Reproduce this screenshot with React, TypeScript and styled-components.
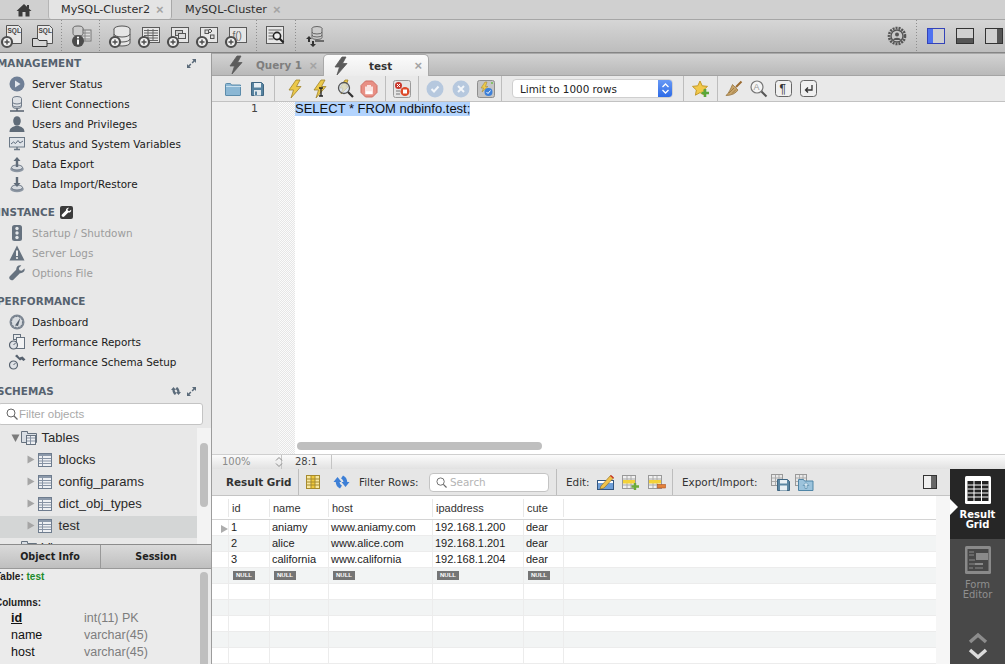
import React from "react";
import styled, { createGlobalStyle } from "styled-components";

const GlobalStyle = createGlobalStyle`
  html, body { margin: 0; padding: 0; background: #e8e8e8; overflow: hidden; }
  * { box-sizing: border-box; }
`;

const UI = `"DejaVu Sans", sans-serif`;
const HELV = `"Liberation Sans", Arial, sans-serif`;

const Window = styled.div`
  width: 1005px;
  height: 664px;
  display: flex;
  flex-direction: column;
  overflow: hidden;
  font-family: ${UI};
`;

const TabBar = styled.div`
  height: 19px;
  display: flex;
  background: #d0d0d0;
  flex: none;
`;
const HomeTab = styled.div`
  width: 48px;
  display: flex;
  align-items: center;
  justify-content: center;
  padding-right: 0;
`;
const ConnTab = styled.div<{ $active?: boolean }>`
  width: ${(p) => (p.$active ? 124 : 120)}px;
  display: flex;
  align-items: center;
  gap: 6px;
  padding-left: ${(p) => (p.$active ? 12 : 13)}px;
  font-size: 11.2px;
  color: #2e2e2e;
  background: ${(p) => (p.$active ? "#e4e4e4" : "transparent")};
  border-left: ${(p) => (p.$active ? "1px solid #b5b5b5" : "none")};
  border-right: ${(p) => (p.$active ? "1px solid #a8a8a8" : "none")};
  border-radius: 0 0 3px 3px;
`;
const TabClose = styled.span<{ $size?: number }>`
  font-family: ${HELV};
  font-size: ${(p) => p.$size ?? 13}px;
  font-weight: 700;
  line-height: 1;
  color: #a4a4a4;
`;

const MainToolbar = styled.div`
  height: 34px;
  flex: none;
  display: flex;
  align-items: center;
  background: linear-gradient(#d6d6d6, #bdbdbd);
  border-top: 1px solid #a6a6a6;
  border-bottom: 1px solid #858585;
`;
const Tool = styled.div<{ $w: number; $ml?: number }>`
  width: ${(p) => p.$w}px;
  margin-left: ${(p) => p.$ml ?? 0}px;
  height: 100%;
  flex: none;
  display: flex;
  align-items: center;
  justify-content: center;
`;
const DotSep = styled.div`
  width: 1px;
  height: 100%;
  flex: none;
  background: repeating-linear-gradient(#8e8e8e 0 1px, transparent 1px 3px);
`;
const Spacer = styled.div`
  flex: 1;
`;

const Body = styled.div`
  flex: 1;
  min-height: 0;
  display: flex;
`;

const Sidebar = styled.aside`
  width: 212px;
  flex: none;
  display: flex;
  flex-direction: column;
  background: #e8e8e8;
  border-right: 1px solid #9c9c9c;
  overflow: hidden;
`;
const SectionHeader = styled.div<{ $mt?: number }>`
  height: 20px;
  margin: ${(p) => p.$mt ?? 0}px 0 1px -3px;
  display: flex;
  align-items: center;
  gap: 5px;
  padding-right: 15px;
  font-size: 10.4px;
  font-weight: 700;
  color: #56626f;
  flex: none;
`;
const HeaderIcons = styled.div`
  margin-left: auto;
  display: flex;
  gap: 5px;
  align-items: center;
`;
const NavItem = styled.div<{ $off?: boolean }>`
  height: 20px;
  display: flex;
  align-items: center;
  font-size: 10.4px;
  color: ${(p) => (p.$off ? "#9c9c9c" : "#1a1a1a")};
  flex: none;
`;
const NavIcon = styled.div`
  width: 32px;
  padding-left: 9px;
  flex: none;
  display: flex;
  align-items: center;
`;
const FilterBox = styled.div`
  height: 22px;
  margin-top: 1px;
  margin-left: -2px;
  width: 205px;
  flex: none;
  display: flex;
  align-items: center;
  gap: 1px;
  padding-left: 7px;
  background: #fff;
  border: 1px solid #c4c4c4;
  border-radius: 3px;
  font-family: ${HELV};
  font-size: 11.5px;
  color: #a9a9a9;
`;
const TreePane = styled.div`
  height: 116px;
  margin-top: 3px;
  flex: none;
  display: flex;
  overflow: hidden;
`;
const TreeList = styled.div`
  width: 197px;
  flex: none;
  overflow: hidden;
`;
const TreeRow = styled.div<{ $depth: number; $selected?: boolean }>`
  height: 22px;
  display: flex;
  align-items: center;
  padding-left: ${(p) => (p.$depth === 0 ? 11 : 26)}px;
  padding-bottom: 3px;
  gap: ${(p) => (p.$depth === 0 ? 1 : 3)}px;
  font-family: ${HELV};
  font-size: 13px;
  color: #2a2a2a;
  background: ${(p) => (p.$selected ? "#d4d6d6" : "transparent")};
`;
const ScrollTrack = styled.div`
  flex: 1;
  background: #f3f3f3;
  padding: 15px 3px 0;
`;
const ScrollThumb = styled.div<{ $h: number }>`
  height: ${(p) => p.$h}px;
  background: #bfbfbf;
  border-radius: 4px;
`;
const SideTabs = styled.div`
  height: 25px;
  flex: none;
  display: flex;
  align-items: center;
  background: linear-gradient(#dadada, #bfbfbf);
  border-top: 1px solid #8c8c8c;
  border-bottom: 1px solid #999;
`;
const SideTab = styled.div<{ $w: number; $sep?: boolean }>`
  width: ${(p) => p.$w}px;
  height: 100%;
  display: flex;
  align-items: center;
  justify-content: center;
  font-size: 9.6px;
  font-weight: 700;
  color: #1f1f1f;
  border-right: ${(p) => (p.$sep ? "1px solid #999" : "none")};
`;
const InfoPane = styled.div`
  flex: 1;
  min-height: 0;
  display: flex;
  background: #ebebeb;
  overflow: hidden;
`;
const InfoText = styled.div`
  width: 197px;
  flex: none;
  padding-top: 2px;
`;
const InfoLabel = styled.div<{ $mb?: number }>`
  margin-left: -5px;
  margin-bottom: ${(p) => p.$mb ?? 0}px;
  height: 12px;
  font-family: ${HELV};
  font-size: 10px;
  line-height: 12px;
  font-weight: 700;
  color: #1d1d1d;
`;
const TableName = styled.span`
  color: #1c8b2b;
`;
const ColRow = styled.div`
  display: grid;
  grid-template-columns: 73px 1fr;
  height: 17px;
  padding-left: 11px;
  font-family: ${HELV};
  font-size: 12.5px;
  line-height: 17px;
`;
const ColName = styled.span<{ $pk?: boolean }>`
  color: #111;
  font-weight: ${(p) => (p.$pk ? 700 : 400)};
  text-decoration: ${(p) => (p.$pk ? "underline" : "none")};
`;
const ColType = styled.span`
  color: #7d7d7d;
`;
const InfoScroll = styled.div`
  flex: 1;
  padding: 3px 3px 0;
`;

const Main = styled.main`
  flex: 1;
  min-width: 0;
  display: flex;
  flex-direction: column;
`;
const QueryTabs = styled.div`
  height: 23px;
  flex: none;
  display: flex;
  align-items: flex-end;
  padding-left: 7px;
  background: linear-gradient(#d2d2d2, #b9b9b9);
  border-top: 1px solid #a8a8a8;
  border-bottom: 1px solid #a4a4a4;
`;
const QueryTab = styled.div<{ $active?: boolean }>`
  width: ${(p) => (p.$active ? 106 : 104)}px;
  height: ${(p) => (p.$active ? 22 : 20)}px;
  margin-bottom: ${(p) => (p.$active ? -1 : 0)}px;
  flex: none;
  display: flex;
  align-items: center;
  padding: 0 6px 0 8px;
  border-radius: 5px 5px 0 0;
  font-size: 10.4px;
  font-weight: 700;
  color: ${(p) => (p.$active ? "#333" : "#7e7e7e")};
  background: ${(p) => (p.$active ? "linear-gradient(#fbfbfb, #ececec)" : "transparent")};
  border: ${(p) => (p.$active ? "1px solid #a9a9a9" : "none")};
  border-bottom: none;
`;
const QueryTabTitle = styled.span<{ $pad: number }>`
  flex: 1;
  padding-left: ${(p) => p.$pad}px;
`;
const QueryToolbar = styled.div`
  height: 26px;
  flex: none;
  display: flex;
  align-items: center;
  padding-left: 9px;
  background: #e9e9e9;
  border-bottom: 1px solid #c2c2c2;
`;
const LineSep = styled.div`
  width: 1px;
  height: 100%;
  flex: none;
  background: #bdbdbd;
`;
const LimitSelect = styled.div`
  width: 161px;
  height: 19px;
  flex: none;
  margin: 0 10px;
  display: flex;
  align-items: center;
  padding-left: 7px;
  background: #fff;
  border: 1px solid #cfcfcf;
  border-radius: 4px;
  font-size: 10.4px;
  color: #222;
  position: relative;
  overflow: hidden;
`;
const SelectStepper = styled.div`
  position: absolute;
  top: -1px;
  bottom: -1px;
  right: -1px;
  width: 15px;
  display: flex;
  align-items: center;
  justify-content: center;
  background: linear-gradient(#6b9cf6, #2a68e6);
  border-radius: 0 4px 4px 0;
`;
const Editor = styled.div`
  height: 353px;
  flex: none;
  display: flex;
  background: #fff;
  border-bottom: 1px solid #cfcfcf;
`;
const Gutter = styled.div`
  width: 66px;
  flex: none;
  background: #efefef;
  padding-right: 20px;
  text-align: right;
  font-size: 11px;
  line-height: 14px;
  color: #444;
`;
const FoldMargin = styled.div`
  width: 17px;
  flex: none;
  background: repeating-conic-gradient(#e6e6e6 0 25%, #fbfbfb 0 50%) 0 0 / 2px 2px;
`;
const CodeArea = styled.div`
  flex: 1;
  display: flex;
  flex-direction: column;
  min-width: 0;
`;
const CodeLine = styled.div`
  flex: 1;
  font-family: ${HELV};
  font-size: 13px;
  line-height: 14px;
`;
const Selected = styled.span`
  display: inline-block;
  background: #b3d4fe;
  color: #111;
`;
const HScroll = styled.div`
  height: 16px;
  flex: none;
  padding: 4px 0 0 2px;
`;
const HThumb = styled.div`
  width: 245px;
  height: 8px;
  border-radius: 4px;
  background: #bfbfbf;
`;
const StatusBar = styled.div`
  height: 14px;
  flex: none;
  display: flex;
  align-items: stretch;
  background: linear-gradient(#fbfbfb, #e2e2e2);
  font-size: 10px;
  line-height: 14px;
  color: #444;
`;
const StatusCell = styled.div<{ $w: number; $pad: number }>`
  width: ${(p) => p.$w}px;
  padding-left: ${(p) => p.$pad}px;
  flex: none;
  display: flex;
  align-items: center;
  gap: 24px;
  border-right: 1px solid #c4c4c4;
`;
const Zoom = styled.span`
  color: #8a8a8a;
`;

const ResultArea = styled.div`
  flex: 1;
  min-height: 0;
  display: flex;
`;
const ResultMain = styled.div`
  flex: 1;
  min-width: 0;
  display: flex;
  flex-direction: column;
`;
const ResultToolbar = styled.div`
  height: 27px;
  flex: none;
  display: flex;
  align-items: center;
  padding-left: 14px;
  background: #e6e6e6;
  border-bottom: 1px solid #c4c4c4;
  font-size: 10.4px;
  color: #333;
`;
const ResultTitle = styled.span`
  width: 72px;
  flex: none;
  font-weight: 700;
`;
const ToolLabel = styled.span<{ $w: number; $ml?: number }>`
  width: ${(p) => p.$w}px;
  margin-left: ${(p) => p.$ml ?? 0}px;
  flex: none;
  white-space: nowrap;
`;
const SearchBox = styled.div`
  width: 120px;
  height: 19px;
  flex: none;
  display: flex;
  align-items: center;
  gap: 3px;
  padding-left: 6px;
  background: #fff;
  border: 1px solid #c4c4c4;
  border-radius: 4px;
  font-size: 10.4px;
  color: #b4b4b4;
`;
const GridWrap = styled.div`
  flex: 1;
  min-height: 0;
  display: flex;
  background: #f6f6f6;
`;
const GridTable = styled.div`
  width: 724px;
  flex: none;
  align-self: flex-start;
  background: #fff;
  border-bottom: 1px solid #d8d8d8;
`;
const cols = "16px 41px 59px 104px 91px 40px 1fr";
const GridHead = styled.div`
  height: 24px;
  display: grid;
  grid-template-columns: ${cols};
  border-bottom: 1px solid #d4d4d4;
  font-family: ${HELV};
  font-size: 11px;
  color: #333;
`;
const HeadCell = styled.div<{ $sep?: boolean }>`
  margin: 3px 0;
  padding-left: 3px;
  line-height: 18px;
  border-left: ${(p) => (p.$sep ? "1px solid #e8e8e8" : "none")};
`;
const GridRow = styled.div<{ $even: boolean }>`
  height: 16px;
  display: grid;
  grid-template-columns: ${cols};
  background: ${(p) => (p.$even ? "#f2f4f4" : "#fff")};
  border-bottom: 1px solid #ececec;
  font-family: ${HELV};
  font-size: 11px;
  line-height: 15px;
  color: #222;
`;
const Cell = styled.div<{ $sep?: boolean }>`
  padding-left: 2px;
  white-space: nowrap;
  overflow: hidden;
  display: flex;
  align-items: center;
  border-left: ${(p) => (p.$sep ? "1px solid #ececec" : "none")};
`;
const RowMark = styled.div`
  width: 0;
  height: 0;
  margin: 3px 0 0 7px;
  border-left: 7px solid #adadad;
  border-top: 4px solid transparent;
  border-bottom: 4px solid transparent;
`;
const NullTag = styled.span`
  margin-left: 2px;
  width: 22px;
  height: 9px;
  background: #757575;
  color: #fff;
  font-size: 6px;
  font-weight: 700;
  line-height: 9px;
  text-align: center;
`;
const SidePanel = styled.div`
  width: 55px;
  flex: none;
  display: flex;
  flex-direction: column;
  background: #484848;
  overflow: hidden;
`;
const SideButton = styled.div<{ $active?: boolean }>`
  height: ${(p) => (p.$active ? 70 : 88)}px;
  flex: none;
  display: flex;
  flex-direction: column;
  align-items: center;
  padding-top: 7px;
  position: relative;
  background: ${(p) => (p.$active ? "#262626" : "transparent")};
  color: ${(p) => (p.$active ? "#fff" : "#8f8f8f")};
  font-size: 10px;
  font-weight: ${(p) => (p.$active ? 700 : 400)};
  line-height: 10px;
  text-align: center;
`;
const SideLabel = styled.div`
  margin-top: 6px;
`;
const Pointer = styled.div`
  position: absolute;
  left: 0;
  top: 30px;
  border-left: 8px solid #fff;
  border-top: 8px solid transparent;
  border-bottom: 8px solid transparent;
`;
const Chevrons = styled.div`
  display: flex;
  justify-content: center;
  padding-top: 4px;
`;

type SvgProps = { w?: number; h?: number; children?: React.ReactNode };
const Svg = ({ w = 18, h = 18, children }: SvgProps) => (
  <svg width={w} height={h} viewBox={`0 0 ${w} ${h}`} style={{ display: "block", flex: "none" }}>
    {children}
  </svg>
);

const Plus = ({ x, y }: { x: number; y: number }) => (
  <g>
    <circle cx={x} cy={y} r="5" fill="#f2f2f2" stroke="#4d4d4d" strokeWidth="2.2" />
    <path d={`M${x - 2.5} ${y}h5M${x} ${y - 2.5}v5`} stroke="#4d4d4d" strokeWidth="1.4" />
  </g>
);
const Page = ({ x, y, w, h }: { x: number; y: number; w: number; h: number }) => (
  <rect x={x} y={y} width={w} height={h} fill="#e6e6e6" stroke="#5a5a5a" />
);

const SqlNew = () => (
  <Svg w={24} h={26}>
    <path d="M6.5 2.5h12l3 3v15h-15z" fill="#e8e8e8" stroke="#555" />
    <text x="7.5" y="9.5" fontFamily={HELV} fontSize="6.5" fontWeight="700" fill="#444">SQL</text>
    <Plus x={7} y={19} />
  </Svg>
);
const SqlOpen = () => (
  <Svg w={24} h={26}>
    <path d="M6.5 2.5h12l3 3v15h-15z" fill="#e8e8e8" stroke="#555" />
    <text x="7.5" y="9.5" fontFamily={HELV} fontSize="6.5" fontWeight="700" fill="#444">SQL</text>
    <path d="M1.5 15.5h5l1.5 2h8v6h-14.5z" fill="#d4d4d4" stroke="#333" />
  </Svg>
);
const InfoDb = () => (
  <Svg w={22} h={26}>
    <rect x="9" y="7" width="12" height="11" fill="#ddd" stroke="#777" />
    <path d="M10 10h10M10 13h10M10 16h10M15 7v11" stroke="#888" />
    <ellipse cx="8" cy="5.5" rx="5" ry="2.5" fill="#ccc" stroke="#666" />
    <path d="M3 5.5v5a5 2.5 0 0 0 10 0v-5" fill="#ccc" stroke="#666" />
    <circle cx="8" cy="18" r="6" fill="#4c4c4c" />
    <path d="M8 16.5v5" stroke="#fff" strokeWidth="2" />
    <circle cx="8" cy="14.5" r="1.1" fill="#fff" />
  </Svg>
);
const NewDb = () => (
  <Svg w={24} h={26}>
    <ellipse cx="14" cy="6" rx="8" ry="3" fill="#e6e6e6" stroke="#555" />
    <path d="M6 6v14a8 3 0 0 0 16 0V6" fill="#e6e6e6" stroke="#555" />
    <path d="M6 11a8 3 0 0 0 16 0M6 16a8 3 0 0 0 16 0" fill="none" stroke="#555" />
    <Plus x={7} y={19} />
  </Svg>
);
const NewTable = () => (
  <Svg w={24} h={26}>
    <Page x={5.5} y={4.5} w={17} h={15} />
    <path d="M7 7.5h14M7 10h14M7 12.5h14M7 15h14M7 17.5h14M11 6v12M16 6v12" stroke="#666" />
    <Plus x={7} y={19} />
  </Svg>
);
const NewView = () => (
  <Svg w={24} h={26}>
    <Page x={5.5} y={4.5} w={17} h={15} />
    <rect x="9.5" y="7.5" width="7" height="5" fill="#ccc" stroke="#555" />
    <rect x="12.5" y="10.5" width="7" height="5" fill="#ddd" stroke="#555" />
    <Plus x={7} y={19} />
  </Svg>
);
const NewProc = () => (
  <Svg w={24} h={26}>
    <Page x={5.5} y={4.5} w={17} h={15} />
    <rect x="10" y="7" width="3.5" height="3.5" fill="#ddd" stroke="#555" />
    <rect x="15.5" y="12" width="3.5" height="3.5" fill="#ddd" stroke="#555" />
    <path d="M15 6l2 2-2 2-2-2z" fill="#ddd" stroke="#555" />
    <Plus x={7} y={19} />
  </Svg>
);
const NewFunc = () => (
  <Svg w={24} h={26}>
    <Page x={5.5} y={4.5} w={17} h={15} />
    <text x="8.5" y="16" fontFamily={HELV} fontSize="10" fill="#666">f()</text>
    <Plus x={7} y={19} />
  </Svg>
);
const Inspect = () => (
  <Svg w={22} h={24}>
    <Page x={1.5} y={2.5} w={17} h={17} />
    <path d="M3.5 6h13M3.5 9h5M3.5 12h5M3.5 15h5" stroke="#666" />
    <circle cx="12" cy="12" r="3.6" fill="#eee" stroke="#222" strokeWidth="1.6" />
    <path d="M14.5 14.5l4 4" stroke="#222" strokeWidth="2.2" />
  </Svg>
);
const Reconnect = () => (
  <Svg w={24} h={24}>
    <ellipse cx="14" cy="4.5" rx="5" ry="2" fill="#ccc" stroke="#666" />
    <path d="M9 4.5v9a5 2 0 0 0 10 0v-9" fill="#ccc" stroke="#666" />
    <path d="M9 8a5 2 0 0 0 10 0M9 11a5 2 0 0 0 10 0" fill="none" stroke="#666" />
    <path d="M12 17h9" stroke="#444" strokeWidth="1.4" />
    <path d="M3 15l3-3 3 3H7v3H5v-3zM7 20l3 3 3-3h-2v-3H9v3z" fill="#333" />
  </Svg>
);
const Gear = () => (
  <Svg w={20} h={20}>
    <circle cx="10" cy="10" r="8" fill="none" stroke="#555" strokeWidth="2.6" strokeDasharray="2 1" />
    <circle cx="10" cy="10" r="6" fill="#c8c8c8" stroke="#555" strokeWidth="1.4" />
    <circle cx="10" cy="8.5" r="2" fill="#555" />
    <path d="M6 14c1-3 7-3 8 0z" fill="#555" />
  </Svg>
);
const PanelToggle = ({ side, active }: { side: "left" | "bottom" | "right"; active?: boolean }) => {
  const line = active ? "#3443b8" : "#333";
  const fill = active ? "#4f72f0" : "#555";
  return (
    <Svg w={18} h={16}>
      <rect x="0.5" y="0.5" width="17" height="15" fill="#d0d0d0" stroke={line} />
      {side === "left" && <rect x="1" y="1" width="5" height="14" fill={fill} />}
      {side === "bottom" && <rect x="1" y="10" width="16" height="5" fill={fill} />}
      {side === "right" && <rect x="12" y="1" width="5" height="14" fill={fill} />}
    </Svg>
  );
};
const HomeIcon = () => (
  <Svg w={16} h={14}>
    <path d="M8 1L0.5 8h2v5.5h4V9h3v4.5h4V8h2z" fill="#3b3b3b" />
    <rect x="11" y="2" width="2" height="3.5" fill="#3b3b3b" />
  </Svg>
);
const Expand = () => (
  <Svg w={9} h={9}>
    <path d="M5 0h4v4L7.6 2.6 5.7 4.4 4.6 3.4 6.4 1.4zM0 9V5l1.4 1.4 1.9-1.9 1.1 1.1-1.9 1.9L4 9z" fill="#5b6b7a" />
  </Svg>
);
const RefreshSmall = () => (
  <Svg w={12} h={10}>
    <path d="M1 4l2.5-3L6 4H4.6c.3 1.6 1 2.5 2 3L5 9C3.5 8.2 2.6 6.400 2.400 4z" fill="#5b6b7a" />
    <path d="M11 6L8.500 9 6 6h1.400c-.3-1.600-1-2.500-2-3L7 1c1.500.8 2.400 2.600 2.600 5z" fill="#5b6b7a" />
  </Svg>
);

const PlayIcon = () => (
  <Svg w={16} h={16}>
    <circle cx="8" cy="8" r="7.500" fill="#6f7f96" />
    <path d="M6 4.500v7l5.500-3.500z" fill="#e4e8ee" />
  </Svg>
);
const ClientsIcon = () => (
  <Svg w={16} h={17}>
    <ellipse cx="8" cy="2.500" rx="4.500" ry="2" fill="#dfe2e6" stroke="#6f7a88" />
    <path d="M3.500 2.500v8a4.500 2 0 0 0 9 0v-8" fill="#dfe2e6" stroke="#6f7a88" />
    <path d="M3.500 6a4.500 2 0 0 0 9 0M3.500 9a4.500 2 0 0 0 9 0" fill="none" stroke="#6f7a88" />
    <path d="M1 15h14M8 12.500V15" stroke="#56606e" strokeWidth="1.500" />
  </Svg>
);
const UserIcon = () => (
  <Svg w={16} h={16}>
    <ellipse cx="8" cy="5" rx="3.800" ry="4.800" fill="#5f6b78" />
    <path d="M0.500 16c0-4 3-5 5.500-6h4c2.500 1 5.500 2 5.500 6z" fill="#5f6b78" />
  </Svg>
);
const MonitorIcon = () => (
  <Svg w={16} h={14}>
    <rect x="0.500" y="0.500" width="15" height="9.500" fill="#dfe3e8" stroke="#6b7886" />
    <path d="M2 7l2.500-2 2 1.500L9 3.500l2 2.500 3-2" fill="none" stroke="#5c6a7a" />
    <path d="M5 12.500h6M8 10v2.500" stroke="#6b7886" strokeWidth="1.500" />
  </Svg>
);
const TrayIcon = ({ up }: { up: boolean }) => (
  <Svg w={16} h={17}>
    <ellipse cx="8" cy="13" rx="6.800" ry="3.300" fill="#8d97a3" />
    <ellipse cx="8" cy="11.500" rx="5.500" ry="2.500" fill="#d7dbe0" stroke="#6f7a88" />
    <path
      d={up ? "M8 1l3.500 4H9.200v6H6.800V5H4.500z" : "M6.800 1h2.400v6h2.300L8 11 4.500 7h2.300z"}
      fill="#5f6b78"
    />
  </Svg>
);
const Traffic = () => (
  <Svg w={16} h={16}>
    <rect x="3" y="0" width="10" height="16" rx="2.500" fill="#66727f" />
    <circle cx="8" cy="3.500" r="1.700" fill="#e4e7ea" />
    <circle cx="8" cy="8" r="1.700" fill="#e4e7ea" />
    <circle cx="8" cy="12.500" r="1.700" fill="#e4e7ea" />
  </Svg>
);
const Warn = () => (
  <Svg w={16} h={16}>
    <path d="M8 0.500L15.500 15.500H0.500z" fill="#66727f" />
    <path d="M8 5.500v5.500" stroke="#eee" strokeWidth="2" />
    <circle cx="8" cy="13" r="1.100" fill="#eee" />
  </Svg>
);
const Wrench = ({ color = "#66727f", s = 16 }: { color?: string; s?: number }) => (
  <svg width={s} height={s} viewBox="0 0 16 16" style={{ display: "block", flex: "none" }}>
    <path d="M15.500 3.500l-2.800 2.300-2.300-.6-.6-2.300L12.300 0.500C9.800-.3 7 1.500 7.200 4.800L0.800 11.200c-1 1.100-.6 2.600.3 3.400.9.900 2.300 1 3.300.1l6.500-6.500c3.200.3 5.500-2.300 4.600-4.700z" fill={color} />
  </svg>
);
const InstanceBadge = () => (
  <Svg w={13} h={13}>
    <rect width="13" height="13" rx="2" fill="#3a3a3a" />
    <g transform="translate(1.500 1.500) scale(0.62)">
      <path d="M15.500 3.500l-2.800 2.300-2.300-.6-.6-2.300L12.300 0.500C9.800-.3 7 1.500 7.200 4.800L0.800 11.200c-1 1.100-.6 2.600.3 3.400.9.900 2.300 1 3.300.1l6.500-6.500c3.200.3 5.500-2.300 4.600-4.700z" fill="#fff" />
    </g>
  </Svg>
);
const DashIcon = () => (
  <Svg w={16} h={16}>
    <circle cx="8" cy="8" r="7.500" fill="#7d8793" />
    <circle cx="8" cy="8" r="5.500" fill="#d8dce0" stroke="#5f6b78" strokeDasharray="1.500 1.500" />
    <path d="M6 11.500L11.500 3.500 9 12z" fill="#56616e" />
  </Svg>
);
const ReportsIcon = () => (
  <Svg w={16} h={16}>
    <rect x="4.500" y="0.500" width="7" height="5" fill="#e6e8ea" stroke="#66727f" />
    <rect x="7.500" y="3.500" width="8" height="11" fill="#f2f3f4" stroke="#66727f" />
    <circle cx="4.500" cy="11" r="4" fill="#dfe2e6" stroke="#56616e" strokeWidth="1.200" />
    <path d="M4.500 11l2-2" stroke="#56616e" />
  </Svg>
);
const SetupIcon = () => (
  <Svg w={17} h={16}>
    <circle cx="4.500" cy="11" r="4" fill="#dfe2e6" stroke="#56616e" strokeWidth="1.200" />
    <path d="M4.500 11l2-2" stroke="#56616e" />
    <path d="M6 2l2-1.500 2.500 3 3-1 3 3-2 1.500-2-1.500-1.500 1z" fill="#56616e" />
  </Svg>
);
const SearchIcon = ({ s = 12, color = "#666" }: { s?: number; color?: string }) => (
  <svg width={s} height={s} viewBox="0 0 12 12" style={{ display: "block", flex: "none" }}>
    <circle cx="5" cy="5" r="4" fill="none" stroke={color} strokeWidth="1" />
    <path d="M8 8l3.500 3.500" stroke={color} strokeWidth="1.300" />
  </svg>
);
const Disclose = ({ open }: { open?: boolean }) => (
  <Svg w={9} h={9}>
    <path d={open ? "M0.500 1.500h8l-4 7.500z" : "M1.500 0.500l7 4-7 4z"} fill={open ? "#7b7b7b" : "#a5a5a5"} />
  </Svg>
);
const TableIcon = () => (
  <Svg w={14} h={14}>
    <rect x="0.500" y="0.500" width="13" height="13" fill="#eef0f3" stroke="#6e7c8e" />
    <rect x="1" y="1" width="12" height="2" fill="#8c99aa" />
    <path d="M1 5.500h12M1 8h12M1 10.500h12M4.500 3v10" stroke="#8793a4" />
  </Svg>
);
const TablesIcon = () => (
  <Svg w={16} h={15}>
    <path d="M0.500 1.500h6v2h9v9h-15z" fill="#d9dee4" stroke="#66727f" />
    <rect x="5.500" y="5.500" width="9" height="9" fill="#eef0f3" stroke="#66727f" />
    <path d="M6 8h8M6 11h8M9.500 6v8" stroke="#8793a4" />
  </Svg>
);

const Bolt = ({ mark, gray }: { mark?: "cursor" | "search"; gray?: boolean }) => (
  <Svg w={18} h={20}>
    <path
      d="M10 1L3 11h4.500L5 19 15 7.500H10.500L14 1z"
      fill={gray ? "#5b5b5b" : "#ecc94a"}
      stroke={gray ? "#5b5b5b" : "#a0832a"}
      strokeWidth="0.800"
    />
    {mark === "cursor" && <path d="M8 9h4M10 9v8M8 17h4" stroke="#222" strokeWidth="1.300" fill="none" />}
  </Svg>
);
const BoltSearch = () => (
  <Svg w={20} h={20}>
    <path d="M10 1L5 9h3L6 15l8-8h-3l2-6z" fill="#ecc94a" stroke="#a0832a" strokeWidth="0.800" />
    <circle cx="9" cy="9" r="5.500" fill="#d8e4f2" fillOpacity="0.700" stroke="#555" strokeWidth="1.300" />
    <path d="M13 13l5 5" stroke="#333" strokeWidth="2.200" />
  </Svg>
);
const StopIcon = () => (
  <Svg w={18} h={18}>
    <path d="M5.500 1h7L17 5.500v7L12.500 17h-7L1 12.500v-7z" fill="#e88f84" stroke="#cf6f63" />
    <path d="M6 13V6.500M8 13V5M10 13V5M12 13V6.500M6 12h6v1.500H6z" stroke="#fff" strokeWidth="1.500" />
  </Svg>
);
const ToggleErr = () => (
  <Svg w={18} h={18}>
    <rect x="0.500" y="0.500" width="17" height="17" rx="2" fill="#e4e4e4" stroke="#9a9a9a" />
    <circle cx="5.500" cy="5.500" r="3.500" fill="#c9362b" />
    <path d="M4 4l3 3M7 4l-3 3" stroke="#fff" />
    <circle cx="12" cy="11.500" r="4.500" fill="#dd4a2a" />
    <rect x="10" y="9.500" width="4" height="4" fill="#fff" />
    <path d="M3 11h4M3 14h4" stroke="#777" />
  </Svg>
);
const RoundBtn = ({ mark }: { mark: "check" | "x" }) => (
  <Svg w={18} h={18}>
    <circle cx="9" cy="9" r="8.500" fill="#b6c8de" />
    <path
      d={mark === "check" ? "M5.500 9l2.500 2.500 4.500-5" : "M6 6l6 6M12 6l-6 6"}
      fill="none"
      stroke="#f3f6fa"
      strokeWidth="2"
    />
  </Svg>
);
const AutoCommit = () => (
  <Svg w={18} h={18}>
    <rect x="0.500" y="0.500" width="17" height="17" rx="2" fill="#c4c4c4" stroke="#8e8e8e" />
    <path d="M8 2L4 8h2.500L5 12l6-5.500H8.500L10 2z" fill="#ecc94a" stroke="#a0832a" strokeWidth="0.500" />
    <circle cx="15" cy="3" r="1" fill="#6fbf4a" />
    <circle cx="11.500" cy="12" r="4" fill="#3b7fd9" />
    <path d="M9.500 12l1.500 1.500 2.500-3" fill="none" stroke="#fff" />
  </Svg>
);
const Folder = () => (
  <Svg w={17} h={14}>
    <path d="M0.500 2.500a1 1 0 0 1 1-1h4l1 1.500h9v10a.5.5 0 0 1-.5.5H1a.5.5 0 0 1-.5-.5z" fill="#8bb7d4" stroke="#5c8cab" />
    <path d="M1 4.500h15" stroke="#c9e0ee" />
  </Svg>
);
const Floppy = ({ color = "#56829f" }: { color?: string }) => (
  <Svg w={13} h={14}>
    <path d="M0.500 0.500h10l2 2v11h-12z" fill={color} stroke="#3f6682" />
    <rect x="3" y="1" width="7" height="4.500" fill="#e8eff4" />
    <rect x="3" y="8" width="7" height="5.500" fill="#dfe7ec" />
    <rect x="4" y="9.500" width="2" height="3.500" fill="#56829f" />
  </Svg>
);
const Star = () => (
  <Svg w={18} h={18}>
    <path d="M8 1l2.200 4.800 5.300.6-3.900 3.600 1 5.200L8 12.600 3.400 15.200l1-5.200L.5 6.400l5.300-.6z" fill="#f2c94a" stroke="#c49a2a" />
    <path d="M13 9v8M9.500 13h7.500" stroke="#5aa63a" strokeWidth="2.600" />
  </Svg>
);
const Broom = () => (
  <Svg w={18} h={18}>
    <path d="M11 7L16.500 1.500" stroke="#9a6a30" strokeWidth="2" />
    <path d="M7.500 4.500L13 10c-2 3-6 5.500-12 5.500C4 13 5.500 9 7.500 4.500z" fill="#c9a56a" stroke="#8c6a35" strokeWidth="0.700" />
    <path d="M4 13l5-5M7 13.500l4-4" stroke="#8c6a35" strokeWidth="0.700" />
  </Svg>
);
const FindA = () => (
  <Svg w={18} h={18}>
    <circle cx="7" cy="7" r="6" fill="#f4f4f4" stroke="#777" strokeWidth="1.200" />
    <text x="3.500" y="10" fontFamily={HELV} fontSize="9" fill="#999">A</text>
    <path d="M11.500 11.500l5 5" stroke="#555" strokeWidth="2" />
  </Svg>
);
const KeyBox = ({ children }: { children: React.ReactNode }) => (
  <Svg w={17} h={17}>
    <rect x="0.500" y="0.500" width="16" height="16" rx="3" fill="#f0f0f0" stroke="#666" />
    {children}
  </Svg>
);
const GridColsIcon = () => (
  <Svg w={14} h={14}>
    <rect x="0.500" y="0.500" width="13" height="13" fill="#f8e8a0" stroke="#a68a2e" />
    <rect x="5" y="1" width="4" height="12" fill="#f0c93a" />
    <path d="M1 4h12M1 7h12M1 10h12" stroke="#a68a2e" />
    <path d="M5 1v12M9 1v12" stroke="#a68a2e" />
  </Svg>
);
const RefreshBlue = () => (
  <Svg w={17} h={14}>
    <path d="M0.500 7L4.500 2 8.500 7H6.500c.3 1.600 1 2.800 2.500 3.500L7 13.500C4.200 12.200 3 10 2.700 7z" fill="#3d7fd6" />
    <path d="M16.500 7l-4 5-4-5h2c-.3-1.600-1-2.800-2.500-3.500L10 .5c2.800 1.300 4 3.500 4.300 6.500z" fill="#3d7fd6" />
  </Svg>
);
const EditRow = () => (
  <Svg w={18} h={16}>
    <rect x="0.500" y="6.500" width="16" height="9" fill="#6f9fd8" stroke="#33557f" />
    <rect x="1" y="7" width="15" height="2" fill="#fff" />
    <path d="M4 12L13.500 1.500l3 2.500L7 14l-4 1z" fill="#f0c24a" stroke="#8a6a1e" strokeWidth="0.600" />
    <path d="M13.500 1.500l3 2.500" stroke="#c9362b" strokeWidth="1.500" />
  </Svg>
);
const RowAction = ({ add }: { add: boolean }) => (
  <Svg w={18} h={15}>
    <rect x="0.500" y="0.500" width="13" height="13" fill="#f0f0f0" stroke="#999" />
    <path d="M1 4h12M1 10h12M5 1v12M9 1v12" stroke="#aaa" />
    <rect x="1" y="5" width="12" height="3.500" fill="#f3d23a" />
    {add ? (
      <path d="M13 8v7M9.500 11.500h7.500" stroke="#6aaa3a" strokeWidth="2.400" />
    ) : (
      <rect x="9.500" y="9.500" width="8" height="3.500" fill="#e2813a" stroke="#b3521e" strokeWidth="0.600" />
    )}
  </Svg>
);
const ExportIcon = ({ open }: { open: boolean }) => (
  <Svg w={19} h={17}>
    <rect x="0.500" y="0.500" width="11" height="11" fill="#e8e8e8" stroke="#999" />
    <path d="M1 4h10M1 7.500h10M4.500 1v10M8 1v10" stroke="#aaa" />
    {open ? (
      <>
        <path d="M3.500 5.500h5l1 1.500h8.500v9.500h-14.500z" fill="#9cc3dc" stroke="#4f85a6" />
        <path d="M11 8.500l3 3h-2v3h-2v-3H8z" fill="#d5e7f2" stroke="#4f85a6" strokeWidth="0.600" />
      </>
    ) : (
      <>
        <path d="M6.500 5.500h10l2 2v9h-12z" fill="#5b86a3" stroke="#3f6682" />
        <rect x="9" y="6" width="7" height="3.500" fill="#e8eff4" />
        <rect x="9" y="11.500" width="7" height="5" fill="#e8eff4" />
      </>
    )}
  </Svg>
);
const HalfPanel = () => (
  <Svg w={14} h={14}>
    <rect x="0.500" y="0.500" width="13" height="13" fill="#efefef" stroke="#333" />
    <rect x="8" y="1" width="5" height="12" fill="#666" />
  </Svg>
);
const GridBig = () => (
  <Svg w={26} h={28}>
    <rect width="26" height="28" rx="1.500" fill="#fff" />
    <rect x="2.500" y="5" width="21" height="20" fill="#222" />
    <path d="M2.500 9h21M2.500 13h21M2.500 17h21M2.500 21h21M9 5v20M16.500 5v20" stroke="#fff" />
  </Svg>
);
const FormBig = () => (
  <Svg w={26} h={28}>
    <rect width="26" height="28" rx="1.500" fill="#8a8a8a" />
    <rect x="2.500" y="3" width="21" height="22" fill="#484848" />
    <path d="M4 6h5M4 9h5M4 14h6M4 18h8M4 22h4M10 22h8" stroke="#8a8a8a" />
    <rect x="11" y="7" width="12" height="7" fill="#8a8a8a" />
    <rect x="10" y="17" width="8" height="2" fill="#8a8a8a" />
  </Svg>
);
const ChevronPair = () => (
  <Svg w={20} h={30}>
    <path d="M2 11l8-7 8 7" fill="none" stroke="#8c8c8c" strokeWidth="3.500" />
    <path d="M2 19l8 7 8-7" fill="none" stroke="#dcdcdc" strokeWidth="3.500" />
  </Svg>
);

const management: [React.ReactNode, string][] = [
  [<PlayIcon />, "Server Status"],
  [<ClientsIcon />, "Client Connections"],
  [<UserIcon />, "Users and Privileges"],
  [<MonitorIcon />, "Status and System Variables"],
  [<TrayIcon up />, "Data Export"],
  [<TrayIcon up={false} />, "Data Import/Restore"],
];
const instance: [React.ReactNode, string][] = [
  [<Traffic />, "Startup / Shutdown"],
  [<Warn />, "Server Logs"],
  [<Wrench />, "Options File"],
];
const performance: [React.ReactNode, string][] = [
  [<DashIcon />, "Dashboard"],
  [<ReportsIcon />, "Performance Reports"],
  [<SetupIcon />, "Performance Schema Setup"],
];

const rows = [
  ["1", "aniamy", "www.aniamy.com", "192.168.1.200", "dear"],
  ["2", "alice", "www.alice.com", "192.168.1.201", "dear"],
  ["3", "california", "www.california", "192.168.1.204", "dear"],
];
const columns = ["id", "name", "host", "ipaddress", "cute"];
const emptyRows = Array.from({ length: 5 });

export default function App() {
  return (
    <Window>
      <GlobalStyle />
      <TabBar>
        <HomeTab><HomeIcon /></HomeTab>
        <ConnTab $active>MySQL-Cluster2 <TabClose>×</TabClose></ConnTab>
        <ConnTab>MySQL-Cluster <TabClose>×</TabClose></ConnTab>
      </TabBar>

      <MainToolbar>
        <Tool $w={24}><SqlNew /></Tool>
        <Tool $w={37}><SqlOpen /></Tool>
        <DotSep />
        <Tool $w={37}><InfoDb /></Tool>
        <DotSep />
        <Tool $w={29} $ml={5}><NewDb /></Tool>
        <Tool $w={29}><NewTable /></Tool>
        <Tool $w={29}><NewView /></Tool>
        <Tool $w={29}><NewProc /></Tool>
        <Tool $w={29}><NewFunc /></Tool>
        <Tool $w={6} />
        <DotSep />
        <Tool $w={38}><Inspect /></Tool>
        <DotSep />
        <Tool $w={38}><Reconnect /></Tool>
        <Spacer />
        <Tool $w={22}><Gear /></Tool>
        <Tool $w={8} />
        <DotSep />
        <Tool $w={8} />
        <Tool $w={22}><PanelToggle side="left" active /></Tool>
        <Tool $w={7} />
        <Tool $w={22}><PanelToggle side="bottom" /></Tool>
        <Tool $w={7} />
        <Tool $w={22}><PanelToggle side="right" /></Tool>
      </MainToolbar>

      <Body>
        <Sidebar>
          <SectionHeader>MANAGEMENT<HeaderIcons><Expand /></HeaderIcons></SectionHeader>
          {management.map(([icon, label]) => (
            <NavItem key={label}><NavIcon>{icon}</NavIcon>{label}</NavItem>
          ))}
          <SectionHeader $mt={8}>INSTANCE <InstanceBadge /></SectionHeader>
          {instance.map(([icon, label]) => (
            <NavItem key={label} $off><NavIcon>{icon}</NavIcon>{label}</NavItem>
          ))}
          <SectionHeader $mt={8}>PERFORMANCE</SectionHeader>
          {performance.map(([icon, label]) => (
            <NavItem key={label}><NavIcon>{icon}</NavIcon>{label}</NavItem>
          ))}
          <SectionHeader $mt={9}>SCHEMAS<HeaderIcons><RefreshSmall /><Expand /></HeaderIcons></SectionHeader>
          <FilterBox><SearchIcon />Filter objects</FilterBox>
          <TreePane>
            <TreeList>
              <TreeRow $depth={0}><Disclose open /><TablesIcon />&nbsp;Tables</TreeRow>
              <TreeRow $depth={1}><Disclose /><TableIcon />&nbsp;blocks</TreeRow>
              <TreeRow $depth={1}><Disclose /><TableIcon />&nbsp;config_params</TreeRow>
              <TreeRow $depth={1}><Disclose /><TableIcon />&nbsp;dict_obj_types</TreeRow>
              <TreeRow $depth={1} $selected><Disclose /><TableIcon />&nbsp;test</TreeRow>
              <TreeRow $depth={0}><Disclose open /><TablesIcon />&nbsp;Views</TreeRow>
            </TreeList>
            <ScrollTrack><ScrollThumb $h={64} /></ScrollTrack>
          </TreePane>
          <SideTabs>
            <SideTab $w={101} $sep>Object Info</SideTab>
            <SideTab $w={110}>Session</SideTab>
          </SideTabs>
          <InfoPane>
            <InfoText>
              <InfoLabel $mb={14}>Table: <TableName>test</TableName></InfoLabel>
              <InfoLabel $mb={1}>Columns:</InfoLabel>
              <ColRow><ColName $pk>id</ColName><ColType>int(11) PK</ColType></ColRow>
              <ColRow><ColName>name</ColName><ColType>varchar(45)</ColType></ColRow>
              <ColRow><ColName>host</ColName><ColType>varchar(45)</ColType></ColRow>
              <ColRow><ColName>ipaddress</ColName><ColType>varchar(45)</ColType></ColRow>
            </InfoText>
            <InfoScroll><ScrollThumb $h={100} /></InfoScroll>
          </InfoPane>
        </Sidebar>

        <Main>
          <QueryTabs>
            <QueryTab>
              <Bolt gray />
              <QueryTabTitle $pad={11}>Query 1</QueryTabTitle>
              <TabClose $size={13}>×</TabClose>
            </QueryTab>
            <QueryTab $active>
              <Bolt gray />
              <QueryTabTitle $pad={19}>test</QueryTabTitle>
              <TabClose $size={13}>×</TabClose>
            </QueryTab>
          </QueryTabs>

          <QueryToolbar>
            <Tool $w={24}><Folder /></Tool>
            <Tool $w={24}><Floppy /></Tool>
            <Tool $w={5} />
            <LineSep />
            <Tool $w={8} />
            <Tool $w={24}><Bolt /></Tool>
            <Tool $w={25}><Bolt mark="cursor" /></Tool>
            <Tool $w={25}><BoltSearch /></Tool>
            <Tool $w={24}><StopIcon /></Tool>
            <Tool $w={4} />
            <LineSep />
            <Tool $w={32}><ToggleErr /></Tool>
            <LineSep />
            <Tool $w={3} />
            <Tool $w={26}><RoundBtn mark="check" /></Tool>
            <Tool $w={25}><RoundBtn mark="x" /></Tool>
            <Tool $w={25}><AutoCommit /></Tool>
            <Tool $w={3} />
            <LineSep />
            <LimitSelect>
              Limit to 1000 rows
              <SelectStepper>
                <Svg w={9} h={13}>
                  <path d="M1.500 5L4.500 2l3 3M1.500 8l3 3 3-3" fill="none" stroke="#fff" strokeWidth="1.300" />
                </Svg>
              </SelectStepper>
            </LimitSelect>
            <LineSep />
            <Tool $w={33}><Star /></Tool>
            <LineSep />
            <Tool $w={4} />
            <Tool $w={24}><Broom /></Tool>
            <Tool $w={25}><FindA /></Tool>
            <Tool $w={25}>
              <KeyBox><text x="4.500" y="13" fontFamily={HELV} fontSize="12" fill="#333">¶</text></KeyBox>
            </Tool>
            <Tool $w={25}>
              <KeyBox><path d="M12 5v5H6M8 7.500L5.500 10 8 12.500" fill="none" stroke="#333" strokeWidth="1.300" /></KeyBox>
            </Tool>
          </QueryToolbar>

          <Editor>
            <Gutter>1</Gutter>
            <FoldMargin />
            <CodeArea>
              <CodeLine><Selected>SELECT * FROM ndbinfo.test;</Selected></CodeLine>
              <HScroll><HThumb /></HScroll>
            </CodeArea>
          </Editor>

          <StatusBar>
            <StatusCell $w={70} $pad={10}><Zoom>100%</Zoom>
              <Svg w={8} h={12}>
                <path d="M1 4.500L4 1.500l3 3M1 7.500l3 3 3-3" fill="none" stroke="#8a8a8a" />
              </Svg>
            </StatusCell>
            <StatusCell $w={50} $pad={13}>28:1</StatusCell>
          </StatusBar>

          <ResultArea>
            <ResultMain>
              <ResultToolbar>
                <ResultTitle>Result Grid</ResultTitle>
                <LineSep />
                <Tool $w={28}><GridColsIcon /></Tool>
                <Tool $w={28}><RefreshBlue /></Tool>
                <ToolLabel $w={70} $ml={4}>Filter Rows:</ToolLabel>
                <SearchBox><SearchIcon s={11} />Search</SearchBox>
                <Tool $w={7} />
                <LineSep />
                <ToolLabel $w={27} $ml={9}>Edit:</ToolLabel>
                <Tool $w={25}><EditRow /></Tool>
                <Tool $w={26}><RowAction add /></Tool>
                <Tool $w={25}><RowAction add={false} /></Tool>
                <Tool $w={3} />
                <LineSep />
                <ToolLabel $w={86} $ml={9}>Export/Import:</ToolLabel>
                <Tool $w={24}><ExportIcon open={false} /></Tool>
                <Tool $w={24}><ExportIcon open /></Tool>
                <Spacer />
                <Tool $w={40}><HalfPanel /></Tool>
              </ResultToolbar>
              <GridWrap>
                <GridTable>
                  <GridHead>
                    <HeadCell />
                    {columns.map((c) => <HeadCell key={c} $sep>{c}</HeadCell>)}
                    <HeadCell $sep />
                  </GridHead>
                  {rows.map((r, i) => (
                    <GridRow key={r[0]} $even={i % 2 === 1}>
                      <Cell>{i === 0 && <RowMark />}</Cell>
                      {r.map((v, j) => <Cell key={j} $sep>{v}</Cell>)}
                      <Cell $sep />
                    </GridRow>
                  ))}
                  <GridRow $even>
                    <Cell />
                    {columns.map((c) => <Cell key={c} $sep><NullTag>NULL</NullTag></Cell>)}
                    <Cell $sep />
                  </GridRow>
                  {emptyRows.map((_, i) => (
                    <GridRow key={i} $even={i % 2 === 1}>
                      <Cell />
                      {columns.map((c) => <Cell key={c} $sep />)}
                      <Cell $sep />
                    </GridRow>
                  ))}
                </GridTable>
              </GridWrap>
            </ResultMain>
            <SidePanel>
              <SideButton $active>
                <GridBig />
                <SideLabel>Result<br />Grid</SideLabel>
                <Pointer />
              </SideButton>
              <SideButton>
                <FormBig />
                <SideLabel>Form<br />Editor</SideLabel>
              </SideButton>
              <Chevrons><ChevronPair /></Chevrons>
            </SidePanel>
          </ResultArea>
        </Main>
      </Body>
    </Window>
  );
}
